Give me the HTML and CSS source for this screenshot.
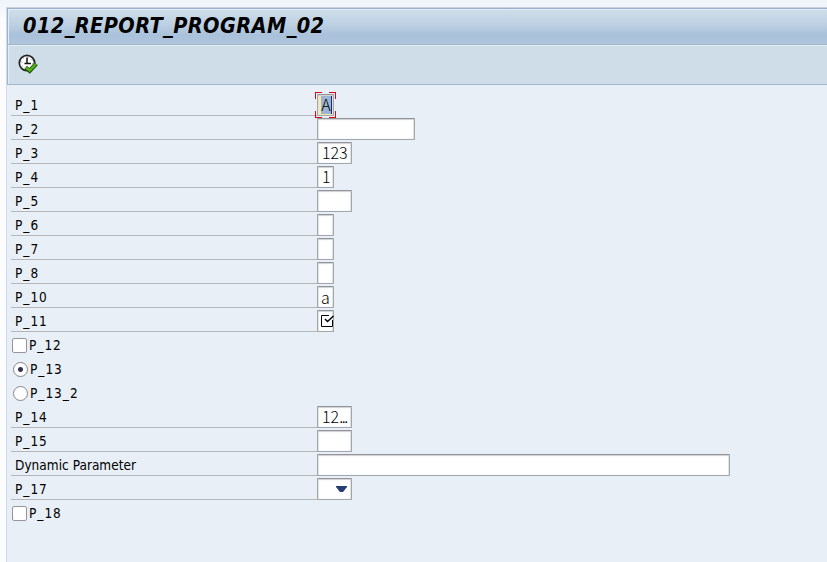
FILE: index.html
```html
<!DOCTYPE html>
<html lang="en">
<head>
<meta charset="utf-8">
<title>012_REPORT_PROGRAM_02</title>
<link rel="stylesheet" href="styles.css">
</head>
<body>
<main class="window">
  <header class="titlebar"><h1 class="title">012_REPORT_PROGRAM_02</h1></header>
  <div class="toolbar">
    <svg class="execute" width="20" height="20" viewBox="0 0 20 20">
      <circle cx="9" cy="9" r="7.7" fill="#fff" stroke="#222" stroke-width="1.7"/>
      <circle cx="9" cy="9" r="6" fill="none" stroke="#777" stroke-width="1" stroke-dasharray="1 3.7"/>
      <path d="M9 3.5V9.5M6.5 9.5H13" fill="none" stroke="#111" stroke-width="1.5"/>
      <path d="M7.5 13.5L11.7 16.8L18.2 9.8" fill="none" stroke="#23550f" stroke-width="4.2"/>
      <path d="M8 13.7L11.7 16.5L17.9 10" fill="none" stroke="#58b51e" stroke-width="2.3"/>
    </svg>
  </div>
  <div class="form">
    <div class="row"><span class="label">P_1</span><span class="field w1 focused"><span class="selected">A</span><i class="corner tl"></i><i class="corner tr"></i><i class="corner bl"></i><i class="corner br"></i></span></div>
    <div class="row"><span class="label">P_2</span><span class="field w10"></span></div>
    <div class="row"><span class="label">P_3</span><span class="field w3">123</span></div>
    <div class="row"><span class="label">P_4</span><span class="field w1">1</span></div>
    <div class="row"><span class="label">P_5</span><span class="field w3"></span></div>
    <div class="row"><span class="label">P_6</span><span class="field w1"></span></div>
    <div class="row"><span class="label">P_7</span><span class="field w1"></span></div>
    <div class="row"><span class="label">P_8</span><span class="field w1"></span></div>
    <div class="row"><span class="label">P_10</span><span class="field w1 lower">a</span></div>
    <div class="row"><span class="label">P_11</span><span class="field w1 required"><svg width="14" height="13" viewBox="0 0 14 13"><path d="M9 1.500H1.500V12.500H12.500V6" fill="none" stroke="#000"/><path d="M5 5L7.500 7.500L13.500 2" fill="none" stroke="#000" stroke-width="1.500"/></svg></span></div>
    <div class="option"><span class="check"></span><span class="caption">P_12</span></div>
    <div class="option"><span class="radio on"></span><span class="caption">P_13</span></div>
    <div class="option"><span class="radio"></span><span class="caption">P_13_2</span></div>
    <div class="row"><span class="label">P_14</span><span class="field w3">12<span class="dots">...</span></span></div>
    <div class="row"><span class="label">P_15</span><span class="field w3"></span></div>
    <div class="row"><span class="label long">Dynamic Parameter</span><span class="field w45"></span></div>
    <div class="row"><span class="label">P_17</span><span class="field w3 dropdown"><svg width="11" height="6" viewBox="0 0 11 6"><path d="M0 0H11V1L7 6H4L0 1Z" fill="#263d73"/></svg></span></div>
    <div class="option"><span class="check"></span><span class="caption">P_18</span></div>
  </div>
</main>
</body>
</html>
```

FILE: styles.css
```css
* { box-sizing: border-box; }
body {
  margin: 0;
  height: 562px;
  overflow: hidden;
  padding: 7px 0 0 6px;
  background: linear-gradient(#f0f3fa, #f3f6fc 8px, #fcfcfe 20px, #fcfdfe);
  font-family: "DejaVu Sans Condensed", "DejaVu Sans", sans-serif;
  font-stretch: condensed;
  font-size: 13.5px;
  letter-spacing: 1px;
  color: #000;
}
.window {
  height: 555px;
  border-left: 1px solid #d0d9e6;
  border-top: 1px solid #c9d2e0;
  background: #e8eff6;
}
.titlebar {
  height: 36px;
  border: solid #9db1cc;
  border-width: 1px 0 0 1px;
  box-shadow: inset 1px 1px #e3edf5;
  background: linear-gradient(#cfdeea, #bdd0e2 45%, #a9c1da 75%, #afc5dc);
  padding-left: 15px;
}
.title {
  margin: 0;
  font-size: 21.5px;
  line-height: 33px;
  font-style: italic;
  font-weight: bold;
  letter-spacing: 0.42px;
  white-space: nowrap;
}
.toolbar {
  height: 41px;
  border: 1px solid #a4b5ce;
  border-right: 0;
  box-shadow: inset 1px 1px #e3edf5;
  background: #cfdde8;
  padding: 9px 0 0 10px;
}
.execute { display: block; }
.form { padding: 7px 0 0 4px; }
.row, .option { height: 24px; display: flex; align-items: flex-end; }
.label {
  width: 306px;
  height: 24px;
  padding-left: 4px;
  line-height: 26px;
  border-bottom: 1px solid #b3b7bc;
  white-space: nowrap;
}
.long { letter-spacing: 0.03px; }
.field {
  position: relative;
  height: 22px;
  padding-left: 4px;
  border: 1px solid #a3a6ab;
  border-top-color: #929499;
  border-radius: 1px;
  box-shadow: inset 0 1px 1px #d0d1d4, inset 1px 0 1px #e2e3e5, inset -1px 0 1px #e2e3e5;
  background: #fff;
  font: 300 16px/18px "Noto Sans CJK KR", sans-serif;
  letter-spacing: 0;
  white-space: nowrap;
}
.w1 { width: 17px; }
.w3 { width: 35px; }
.w10 { width: 98px; }
.w45 { width: 413px; }
.lower { padding-left: 3px; line-height: 20px; }
.dots { letter-spacing: -1.5px; }
.focused { background: #faeb9e; padding: 1px 0 0 3px; }
.selected {
  display: block;
  width: 11px;
  height: 18px;
  line-height: 17px;
  text-align: center;
  background: #9cb3d3;
  border-right: 1px solid #142d75;
}
.corner { position: absolute; width: 7px; height: 7px; border: 0 solid #d90913; }
.tl { left: -3px; top: -3px; border-width: 1px 0 0 1px; }
.tr { right: -3px; top: -3px; border-width: 1px 1px 0 0; }
.bl { left: -3px; bottom: -3px; border-width: 0 0 1px 1px; }
.br { right: -3px; bottom: -3px; border-width: 0 1px 1px 0; }
.required { padding: 3px 0 0 2px; }
.required svg { display: block; }
.dropdown { padding: 7px 0 0 18px; }
.dropdown svg { display: block; }
.option { align-items: center; padding: 3px 0 0 1px; gap: 2px; }
.caption { line-height: 18px; padding-bottom: 2px; }
.check {
  width: 15px;
  height: 15px;
  border: 1px solid #94969a;
  border-radius: 2px;
  background: #fff;
}
.radio {
  width: 15px;
  height: 15px;
  margin-left: 1px;
  border: 1px solid #85888d;
  border-radius: 50%;
  background: #fff;
}
.on { background: radial-gradient(circle, #30344e 2px, #fff 3px); }
```
